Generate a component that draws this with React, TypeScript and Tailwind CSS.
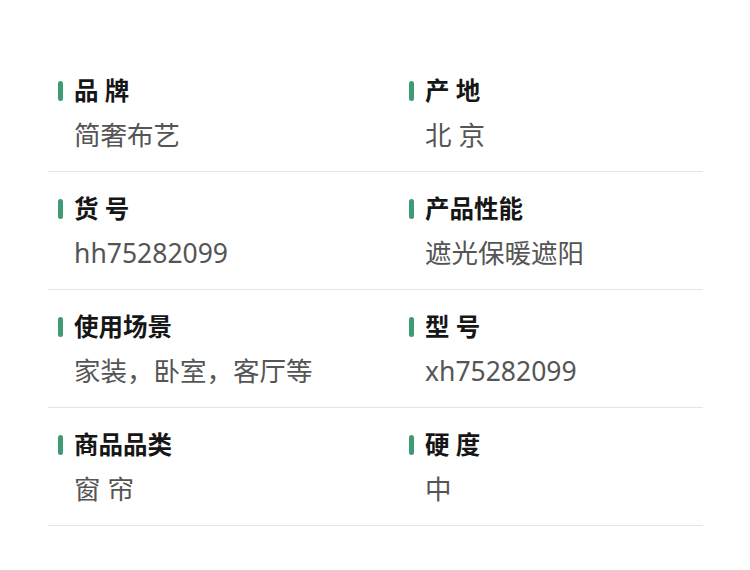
import React from 'react';

interface Spec {
  label: string;
  value: string;
}

const specRows: Spec[][] = [
  [
    { label: '品 牌', value: '简奢布艺' },
    { label: '产 地', value: '北 京' },
  ],
  [
    { label: '货 号', value: 'hh75282099' },
    { label: '产品性能', value: '遮光保暖遮阳' },
  ],
  [
    { label: '使用场景', value: '家装，卧室，客厅等' },
    { label: '型 号', value: 'xh75282099' },
  ],
  [
    { label: '商品品类', value: '窗 帘' },
    { label: '硬 度', value: '中' },
  ],
];

const SpecCell = ({ spec }: { spec: Spec }) => (
  <div className="pl-[10px]">
    <div className="flex items-center h-[32px]">
      <span className="w-[5px] h-[20px] rounded-full bg-[#3f9b74] mr-[11px]" />
      <span className="text-[24.5px] leading-[32px] font-bold text-[#161616]">{spec.label}</span>
    </div>
    <div className="mt-[10px] pl-[16px] text-[26.5px] leading-[36px] text-[#555555]">
      {spec.value}
    </div>
  </div>
);

export default function App() {
  return (
    <div
      className="w-[750px] h-[570px] bg-white pt-[54px] px-[48px]"
      style={{ fontFamily: '"Noto Sans", "Noto Sans CJK SC", sans-serif' }}
    >
      <div className="w-[655px]">
        {specRows.map((row, i) => (
          <div
            key={i}
            className="grid grid-cols-[351px_1fr] pt-[21px] pb-[18px] border-b border-[#dde9e7]"
          >
            {row.map((spec) => (
              <SpecCell key={spec.label} spec={spec} />
            ))}
          </div>
        ))}
      </div>
    </div>
  );
}
